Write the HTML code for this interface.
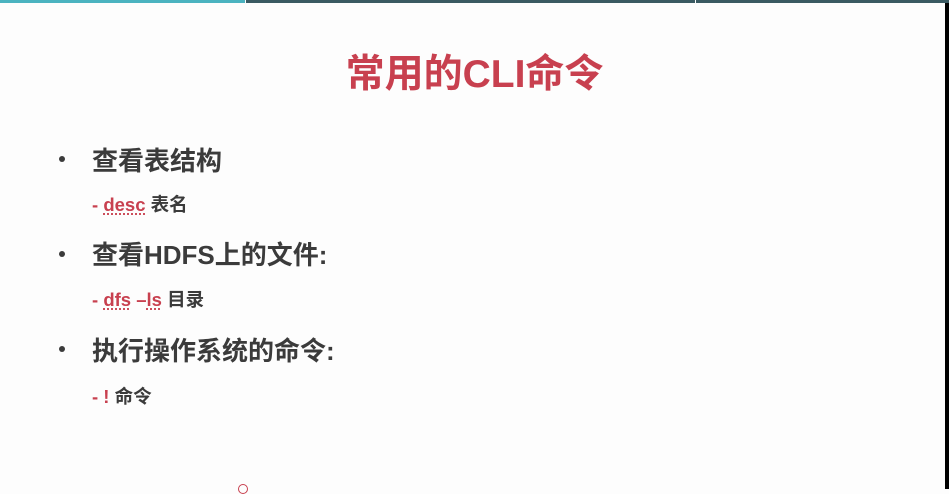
<!DOCTYPE html>
<html><head><meta charset="utf-8"><style>
html,body{margin:0;padding:0;}
body{width:949px;height:489px;background:#fdfdfd;position:relative;overflow:hidden;font-family:"Liberation Sans","Noto Sans CJK SC",sans-serif;font-weight:bold;}
.bar{position:absolute;top:0;height:3px;}
.t{position:absolute;white-space:nowrap;}
.b{color:#3b3b3b;font-size:26px;}
.s{color:#3b3b3b;font-size:18.5px;}
.r{color:#c8404f;}
u{text-decoration:underline dotted #c8404f;text-underline-offset:3px;}
.dot{position:absolute;left:59px;width:6px;height:6px;border-radius:50%;background:#3b3b3b;}
</style></head><body>
<div class="bar" style="left:0;width:245px;background:#4bb3c0"></div>
<div class="bar" style="left:246px;width:449px;background:#3a5a62"></div>
<div class="bar" style="left:696px;width:253px;background:#3a5a62"></div>
<div style="position:absolute;right:0;top:3px;width:4px;height:486px;background:#000"></div>
<div class="t" style="left:0;width:949px;text-align:center;top:43px;font-size:39px;color:#c8404f;">常用的CLI命令</div>
<div class="dot" style="top:156px"></div>
<div class="t b" style="left:92px;top:141px">查看表结构</div>
<div class="t s" style="left:92px;top:191px"><span class="r">- <u>desc</u></span> 表名</div>
<div class="dot" style="top:251px"></div>
<div class="t b" style="left:92px;top:235px">查看HDFS上的文件:</div>
<div class="t s" style="left:92px;top:286px"><span class="r">- <u>dfs</u> –<u>ls</u></span> 目录</div>
<div class="dot" style="top:346px"></div>
<div class="t b" style="left:92px;top:331px">执行操作系统的命令:</div>
<div class="t s" style="left:92px;top:383px"><span class="r">- !</span> 命令</div>
<div style="position:absolute;left:238px;top:484px;width:8px;height:8px;border:1.5px solid #c8404f;border-radius:50%"></div>
</body></html>
